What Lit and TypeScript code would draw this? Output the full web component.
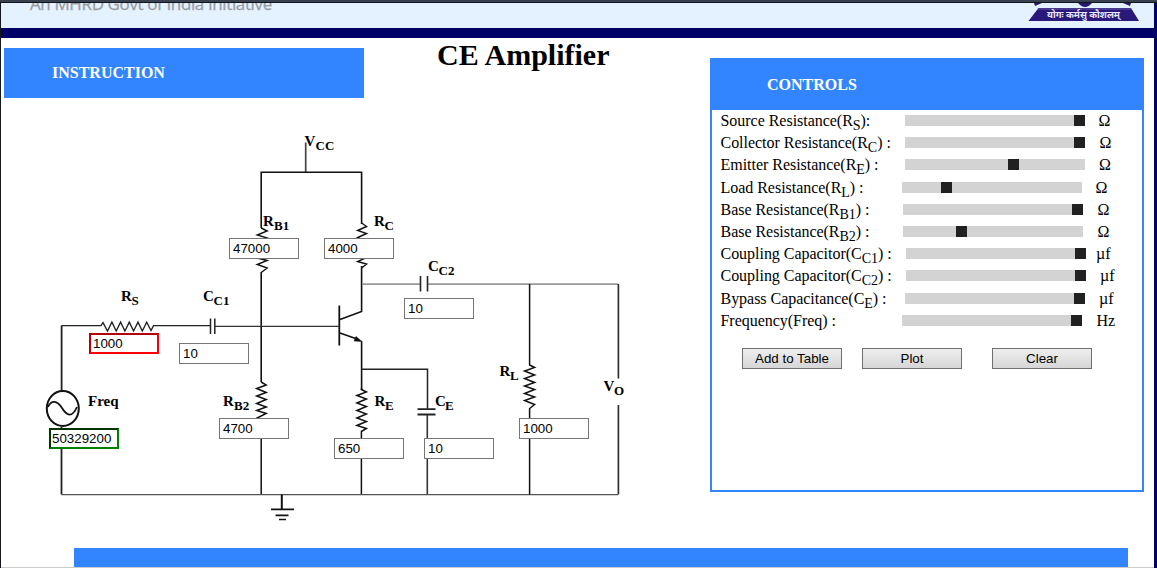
import { LitElement, html, css, svg } from "lit";
import { customElement } from "lit/decorators.js";

interface Control { name: string; sub: string; tail: string; start: number; thumb: number; unit: string; gap: number; h: number; }
const CONTROLS: Control[] = [
  { name: "Source Resistance(R", sub: "S", tail: "):", start: 184, thumb: 169, unit: "Ω", gap: 13.5, h: 22 },
  { name: "Collector Resistance(R", sub: "C", tail: ") :", start: 184, thumb: 169, unit: "Ω", gap: 14.5, h: 22 },
  { name: "Emitter Resistance(R", sub: "E", tail: ") :", start: 184, thumb: 103, unit: "Ω", gap: 14, h: 22 },
  { name: "Load Resistance(R", sub: "L", tail: ") :", start: 181, thumb: 39, unit: "Ω", gap: 13.5, h: 23 },
  { name: "Base Resistance(R", sub: "B1", tail: ") :", start: 182, thumb: 169, unit: "Ω", gap: 14.5, h: 22 },
  { name: "Base Resistance(R", sub: "B2", tail: ") :", start: 182, thumb: 53, unit: "Ω", gap: 14.5, h: 22 },
  { name: "Coupling Capacitor(C", sub: "C1", tail: ") :", start: 185, thumb: 169, unit: "µf", gap: 10, h: 22 },
  { name: "Coupling Capacitor(C", sub: "C2", tail: ") :", start: 185, thumb: 169, unit: "µf", gap: 14, h: 22 },
  { name: "Bypass Capacitance(C", sub: "E", tail: ") :", start: 184, thumb: 169, unit: "µf", gap: 14, h: 23 },
  { name: "Frequency(Freq) :", sub: "", tail: "", start: 181, thumb: 169, unit: "Hz", gap: 14.5, h: 22 },
];

// Value boxes pinned on the schematic: x, y, value, extra class
const FIELDS: [number, number, string, string][] = [
  [229, 238, "47000", ""], [324, 238, "4000", ""], [404, 298, "10", ""],
  [89, 333, "1000", "red"], [179, 343, "10", ""], [49, 428, "50329200", "green"],
  [219, 418, "4700", ""], [334, 438, "650", ""], [424, 438, "10", ""], [519, 418, "1000", ""],
];

// Part names: x, baseline, letter, subscript x, subscript
const LABELS: [number, number, string, number, string][] = [
  [304.5, 146, "V", 315.5, "CC"], [263, 226, "R", 274, "B1"], [374, 226, "R", 384.5, "C"],
  [428, 271, "C", 438.5, "C2"], [121, 301, "R", 131.5, "S"], [203, 301, "C", 213.5, "C1"],
  [223, 406, "R", 234, "B2"], [374.5, 406, "R", 385, "E"], [435, 406, "C", 445, "E"],
  [499.5, 376, "R", 510, "L"], [603.5, 391, "V", 614, "O"], [88, 406, "Freq", 0, ""],
];

@customElement("app-root")
export class AppRoot extends LitElement {
  static styles = css`
    :host { display: block; width: 1157px; height: 568px; overflow: hidden; background: #fff; color: #000;
      font-family: "Liberation Serif", "Times New Roman", serif; font-size: 16px; }
    * { box-sizing: border-box; }
    .page { height: 568px; display: flex; flex-direction: column; }
    .chrome { height: 3px; flex: none; background: #37414f; border-bottom: 1px solid #11151b; }
    .frame { flex: 1; min-height: 0; display: flex; flex-direction: column; border-left: 1px solid #14171c; border-right: 3px solid #000066; }
    .banner { height: 25px; flex: none; background: #e4f2ff; overflow: hidden; display: flex; justify-content: space-between; }
    .tagline { font: 17px/20px "Open Sans", sans-serif; letter-spacing: -0.38px; color: #9a9ea3; -webkit-text-stroke: 0.3px #9a9ea3;
      margin: -9px 0 0 29px; white-space: nowrap; }
    .badge { width: 112px; height: 25px; margin-right: 14px; flex: none; }
    .rule { height: 10px; flex: none; background: #000066; margin-right: -3px; }
    .main { height: 510px; flex: none; display: grid; grid-template-columns: 709px 434px; position: relative; }
    .left { position: relative; }
    .heads { display: flex; }
    .instruction { width: 360px; height: 50px; margin: 10px 0 0 3px; padding: 0 48px; background: #3385ff; color: #fff; font-weight: bold; line-height: 49px; }
    h1 { margin: 0 0 0 73px; font-size: 30px; line-height: 34px; height: 34px; white-space: nowrap; }
    .circuit { position: absolute; left: -1px; top: -38px; width: 709px; height: 548px; }
    .circuit svg { display: block; }
    .field { position: absolute; width: 70px; height: 21px; margin: 0; padding: 1px 2px 1px 3px; border: 1px solid #767676; border-radius: 0; outline: 0;
      background: #fff; color: #000; font: 13.333px "Liberation Sans", Arial, sans-serif; }
    .red { border: 2px solid; border-color: #b4000b #f00 #f00 #b4000b; padding: 0 2px; }
    .green { border: 2px solid; border-color: #003400 #008000 #008000 #003400; padding: 0 1px; }
    .controls { margin-top: 20px; width: 434px; height: 434px; border: 2px solid #3385ff; }
    .ctitle { height: 50px; background: #3385ff; color: #fff; font-weight: bold; line-height: 50px; padding-left: 55px; }
    .rows { padding: 0 0 0 9px; }
    .row { display: flex; white-space: nowrap; line-height: 22px; align-items: flex-end; }
    .name { flex: none; height: 22px; text-indent: -0.5px; letter-spacing: -0.03px; }
    .small { font-size: 14px; line-height: 0; position: relative; top: 4px; }
    .track { width: 180px; height: 11px; flex: none; margin-bottom: 6px; background: #d3d3d3; }
    .thumb { width: 11px; height: 11px; background: #212121; }
    .unit { height: 22px; }
    .buttons { display: flex; padding: 16px 0 0 30px; }
    button { width: 100px; height: 21px; margin: 0 20px 0 0; padding: 0; border: 1px solid #707070; border-radius: 0; background: linear-gradient(#eee, #d6d6d6);
      color: #000; font: 13.333px "Liberation Sans", Arial, sans-serif; }
    .gap { margin-right: 30px; }
    .footer { flex: none; height: 20px; padding: 0 26px 0 73px; border-bottom: 1px solid #ccc; }
    .strip { height: 19px; background: #3385ff; }
  `;

  private label([x, y, t, sx, s]: [number, number, string, number, string]) {
    return svg`<text x=${x} y=${y} font-size="15" font-weight="bold">${t}</text>
      <text x=${sx} y=${y + 4} font-size="13" font-weight="bold">${s}</text>`;
  }

  render() {
    return html`<div class="page">
      <div class="chrome"></div>
      <div class="frame">
        <header class="banner">
          <div class="tagline">An MHRD Govt of India Initiative</div>
          <svg class="badge" viewBox="1028 3 112 25" width="112" height="25">
            <path d="M1034 3h8l-7 3zM1131 3h-8l7 3zM1078 3h14q-7 8-14 0z" fill="#251a70" />
            <path d="M1038.500 8h92.500l8 13h-110.500z" fill="#28197a" />
            <path d="M1037.500 9h94" stroke="#8f88c4" stroke-width=".6" />
            <text x="1047" y="18" font-size="10" font-weight="bold" fill="#e9e7fa" textLength="73" lengthAdjust="spacingAndGlyphs" font-family="Noto Sans Devanagari, Noto Sans, sans-serif">योगः कर्मसु कौशलम्</text>
          </svg>
        </header>
        <div class="rule"></div>
        <main class="main">
          <section class="left">
            <div class="circuit">
              <svg width="709" height="548" viewBox="0 0 709 548" fill="none" stroke="#111" stroke-width="1.6">
                <path d="M305.700 142.500V172" stroke="#444" stroke-width="1.7" />
                <path d="M261.200 228V172.300H361.600V224" />
                <path d="M261.200 228l6 3-10 4 10 3-10 4 10 4-10 4 10 4-10 4 10 2.500-10 4 10 3.500-6 4.500" stroke-width="1.4" />
                <path d="M361.600 223l5 3.500-9 4 9 3-9 4 9 4-9 4 9 4-9 4 9 4-9 4 9 2.500-5 4" stroke-width="1.4" />
                <path d="M261.200 272V382" />
                <path d="M361.600 266V311.500L340 319.500" />
                <path d="M362 284.200H420.500M428 284.200H618" stroke="#999" stroke-width="1.7" />
                <path d="M420.500 276v15.500M427.500 276v15.500" stroke="#222" />
                <path d="M339.300 305.500V345.500" stroke-width="1.8" />
                <path d="M340 333L357 339M361.600 341V390" />
                <path d="M356 336.500l6 5-8-.5z" fill="#111" stroke-width=".5" />
                <path d="M361.600 369.300H427.500V408.500" stroke="#222" stroke-width="1.5" />
                <path d="M417.500 409.200h18M417.500 414.500h18" stroke="#222" stroke-width="1.8" />
                <path d="M427.300 415V494.500" stroke="#333" />
                <path d="M361.600 388l-.2 1.500 5 2.500-9.500 3.500 9.500 3.500-9.500 4 9.500 3.500-9.500 4 9.500 3.500-9.500 4 9.500 3.500-9.500 4 9.500 3-5 3V494.500" stroke-width="1.5" />
                <path d="M261.200 382l5 3-9.500 3.500 9.500 4-9.500 3.500 9.500 3.500-9.500 4 9.500 3.500-9.500 3.500 9.500 3-10 5M261.200 439V494.500" stroke-width="1.5" />
                <path d="M61.600 392V325.600" stroke="#222" stroke-width="1.8" />
                <path d="M61.500 325.600H101l2-3 4.500 8.500 4.400-9 4.300 9 4.400-9 4.300 9 4.400-9 4.300 9 4.400-9 4.300 9 4.400-9 4.300 8.500 2.500-5H210" stroke="#222" stroke-width="1.3" />
                <path d="M210.500 318.500v15.500M214.800 318.500v15.500" stroke="#222" stroke-width="1.5" />
                <path d="M215 326.400H339" stroke="#333" stroke-width="1.2" />
                <ellipse cx="62.800" cy="408.500" rx="16" ry="17.500" stroke-width="2" />
                <path d="M48 407C51 400 57 400 62 408S72 418 77 407" stroke-width="1.8" />
                <path d="M61.500 427V494.500" stroke="#222" stroke-width="1.8" />
                <path d="M61.500 494.600H618" stroke="#555" stroke-width="1.4" />
                <path d="M281.800 494.500V509" stroke-width="2" />
                <path d="M271 509.300h23M275.500 515.300h13M279 519.500h7" stroke-width="1.7" />
                <path d="M529.600 284V365l5 2.500-10 3.500 10 4-10 3.500 10 4-10 3.500 10 3.500-10 4 10 3.500-10 3.500 10 4-5 4V494.500" stroke-width="1.5" />
                <path d="M618.400 284V378.500M618.400 405V494.500" stroke="#333" stroke-width="1.7" />
                <g fill="#000" stroke="none">${LABELS.map((l) => this.label(l))}</g>
              </svg>
              ${FIELDS.map(([x, y, v, c]) => html`<input class="field ${c}" style="left:${x}px;top:${y}px" .value=${v} />`)}
            </div>
            <div class="heads">
              <div class="instruction">INSTRUCTION</div>
              <h1>CE Amplifier</h1>
            </div>
          </section>
          <section class="controls">
            <div class="ctitle">CONTROLS</div>
            <div class="rows">
              ${CONTROLS.map((c) => html`<div class="row" style="height:${c.h}px">
                <div class="name" style="width:${c.start}px">${c.name}<span class="small">${c.sub}</span>${c.tail}</div>
                <div class="track"><div class="thumb" style="margin-left:${c.thumb}px"></div></div>
                <div class="unit" style="margin-left:${c.gap}px">${c.unit}</div>
              </div>`)}
            </div>
            <div class="buttons">
              <button>Add to Table</button><button class="gap">Plot</button><button>Clear</button>
            </div>
          </section>
        </main>
        <footer class="footer"><div class="strip"></div></footer>
      </div>
    </div>`;
  }
}
